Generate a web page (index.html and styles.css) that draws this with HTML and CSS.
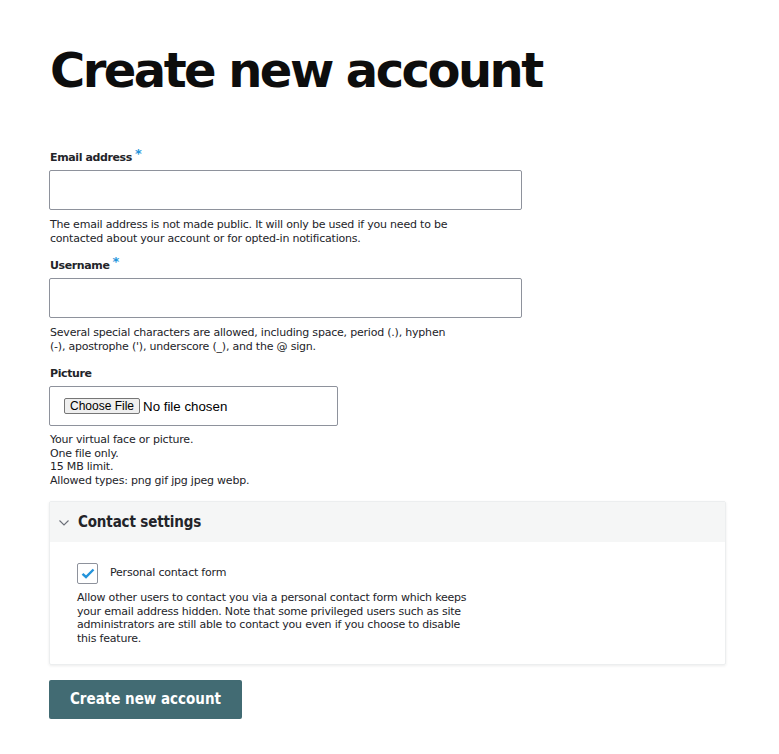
FILE: index.html
```html
<!DOCTYPE html>
<html lang="en">
<head>
<meta charset="utf-8">
<title>Create new account</title>
<link rel="stylesheet" href="styles.css">
</head>
<body>
<main class="page">
  <h1 class="title">Create new account</h1>
  <form class="form">
    <div class="field">
      <label class="label" for="mail">Email address<span class="req">*</span></label>
      <input class="text-input" id="mail" type="email">
      <div class="desc">The email address is not made public. It will only be used if you need to be<br>contacted about your account or for opted-in notifications.</div>
    </div>
    <div class="field">
      <label class="label" for="name">Username<span class="req">*</span></label>
      <input class="text-input" id="name" type="text">
      <div class="desc">Several special characters are allowed, including space, period (.), hyphen<br>(-), apostrophe ('), underscore (_), and the @ sign.</div>
    </div>
    <div class="field field-last">
      <label class="label" for="pic">Picture</label>
      <div class="file-box">
        <span class="file-btn">Choose File</span><span class="file-none">No file chosen</span>
      </div>
      <div class="desc desc-tight">Your virtual face or picture.<br>One file only.<br>15 MB limit.<br>Allowed types: png gif jpg jpeg webp.</div>
    </div>
    <div class="details">
      <div class="summary">
        <svg class="chev" width="10" height="6" viewBox="0 0 10 6"><path d="M0.5 0.5 L5 5 L9.5 0.5" fill="none" stroke="#6b6f78" stroke-width="1.1"/></svg>
        <span>Contact settings</span>
      </div>
      <div class="details-body">
        <div class="check-row">
          <span class="checkbox"><svg width="14" height="11" viewBox="0 0 14 11"><path d="M1.5 5.8 L5 9 L12.5 1.5" fill="none" stroke="#2494db" stroke-width="2.4"/></svg></span>
          <span class="check-label">Personal contact form</span>
        </div>
        <div class="desc check-desc">Allow other users to contact you via a personal contact form which keeps<br>your email address hidden. Note that some privileged users such as site<br>administrators are still able to contact you even if you choose to disable<br>this feature.</div>
      </div>
    </div>
    <button class="submit" type="button">Create new account</button>
  </form>
</main>
</body>
</html>
```
FILE: styles.css
```css
* { box-sizing: border-box; }
html, body { margin: 0; padding: 0; background: #fff; }
body { font-family: "DejaVu Sans", Verdana, sans-serif; color: #232429; }
.page { padding: 38px 53px 0 49px; }
.title {
  margin: 0 0 0 1px;
  font-family: "DejaVu Sans", sans-serif;
  font-weight: bold;
  font-size: 48px;
  letter-spacing: -0.053em;
  line-height: 64px;
  color: #0d0d0d;
}
.form { margin-top: 48px; display: flex; flex-direction: column; }
.field { display: flex; flex-direction: column; margin-bottom: 12px; }
.field-last { margin-top: 1px; margin-bottom: 0; }
.label {
  font-family: "DejaVu Sans", sans-serif;
  font-weight: bold;
  font-size: 11px;
  letter-spacing: -0.035em;
  line-height: 14px;
  margin: 0 0 5px 1px;
  color: #232429;
}
.req { color: #2494db; font-size: 13px; margin-left: 3px; position: relative; top: -3px; }
.text-input {
  width: 473px;
  height: 40px;
  border: 1px solid #8e929c;
  border-radius: 2px;
  background: #fff;
  margin: 0;
}
.desc {
  margin-top: 8px;
  font-size: 11px;
  line-height: 14px;
  letter-spacing: -0.019em;
  color: #232429;
  margin-left: 1px;
}
.desc-tight { line-height: 13.7px; margin-top: 7px; }
.file-box {
  width: 289px;
  height: 40px;
  border: 1px solid #8e929c;
  border-radius: 2px;
  display: flex;
  align-items: center;
  padding-left: 14px;
  font-family: "Liberation Sans", Arial, sans-serif;
  font-size: 13.3px;
}
.file-btn {
  display: inline-block;
  height: 16px;
  line-height: 14px;
  padding: 0 5px;
  font-size: 12px;
  border: 1px solid #767676;
  border-radius: 2px;
  background: #efefef;
  color: #000;
  margin-right: 3px;
}
.file-none { color: #000; }
.details {
  margin-top: 13px;
  width: 677px;
  border: 1px solid #eceeef;
  border-radius: 2px;
  box-shadow: 0 1px 3px rgba(0, 0, 0, 0.08);
}
.summary {
  height: 40px;
  background: #f5f6f6;
  display: flex;
  align-items: center;
  padding-left: 9px;
  gap: 9px;
  font-family: "DejaVu Sans Condensed", "DejaVu Sans", sans-serif;
  font-weight: bold;
  font-size: 15px;
  letter-spacing: -0.01em;
  color: #232429;
}
.chev { margin-top: 2px; }
.details-body { padding: 21px 27px 18px 27px; }
.check-row { display: flex; align-items: center; gap: 12px; }
.checkbox {
  width: 21px;
  height: 21px;
  border: 1px solid #8e929c;
  border-radius: 2px;
  display: flex;
  align-items: center;
  justify-content: center;
}
.check-label { font-size: 11px; line-height: 14px; margin-top: -1px; letter-spacing: -0.019em; }
.check-desc { margin-top: 7px; margin-left: 0; line-height: 13.7px; }
.submit {
  margin-top: 15px;
  width: 193px;
  height: 39px;
  border: none;
  border-radius: 2px;
  background: #426b73;
  color: #fff;
  font-family: "DejaVu Sans Condensed", "DejaVu Sans", sans-serif;
  font-weight: bold;
  font-size: 15px;
  padding: 0;
}
```
